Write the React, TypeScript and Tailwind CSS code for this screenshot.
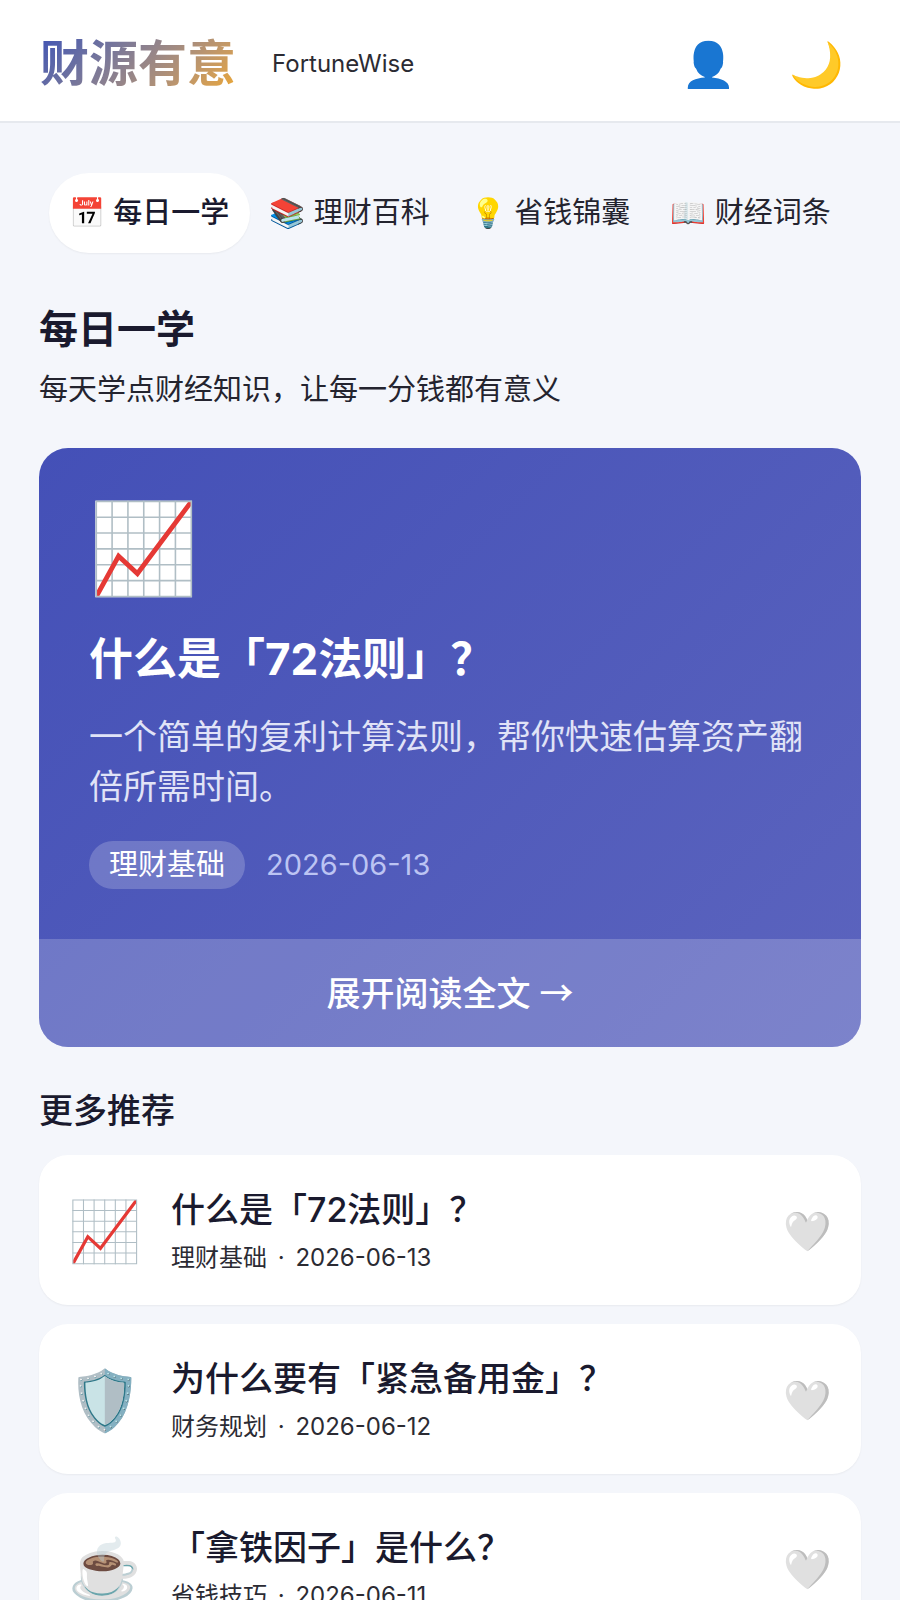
import { useState } from 'react';

const TABS = [
  { id: 'daily', label: '每日一学', icon: '📅' },
  { id: 'wiki', label: '理财百科', icon: '📚' },
  { id: 'saving', label: '省钱锦囊', icon: '💡' },
  { id: 'terms', label: '财经词条', icon: '📖' },
];

const ARTICLES = [
  { title: '什么是「72法则」？', category: '理财基础', date: '2026-06-13', icon: '📈' },
  { title: '为什么要有「紧急备用金」？', category: '财务规划', date: '2026-06-12', icon: '🛡️' },
  { title: '「拿铁因子」是什么？', category: '省钱技巧', date: '2026-06-11', icon: '☕' },
];

export default function App() {
  const [tab, setTab] = useState('daily');
  const [liked, setLiked] = useState<string[]>([]);

  const toggleLike = (title: string) =>
    setLiked((prev) => (prev.includes(title) ? prev.filter((t) => t !== title) : [...prev, title]));

  return (
    <div className="flex h-screen flex-col bg-[#f4f6fb] font-[Inter,'Noto_Sans_CJK_SC','Noto_Color_Emoji',sans-serif] text-[#1a1a2e]">
      <header className="flex shrink-0 items-center justify-between border-b-2 border-[#e6e9ee] bg-white px-10 pt-[31px] pb-6">
        <div className="flex items-center gap-9">
          <h1 className="bg-linear-135 from-[#3f51b5] to-[#f0a81c] bg-clip-text text-[49px] leading-[66px] font-bold text-transparent">
            财源有意
          </h1>
          <span className="text-2xl text-[#2b2b33]">FortuneWise</span>
        </div>
        <div className="flex items-center gap-[53px] pr-4 text-[44px] leading-none">
          <button type="button" aria-label="个人中心">
            👤
          </button>
          <button type="button" aria-label="夜间模式">
            🌙
          </button>
        </div>
      </header>

      <main className="min-h-0 flex-1 overflow-y-auto px-[39px] pt-[50px] [scrollbar-width:none]">
        <nav className="flex px-[10px]">
          {TABS.map((item) => (
            <button
              key={item.id}
              type="button"
              onClick={() => setTab(item.id)}
              className={`flex h-20 flex-1 items-center justify-center gap-2 rounded-full text-[29px] whitespace-nowrap ${
                tab === item.id ? 'bg-white font-medium shadow-xs' : 'text-[#24242f]'
              }`}
            >
              <span className="w-9 shrink-0">{item.icon}</span>
              {item.label}
            </button>
          ))}
        </nav>

        <section className="mt-12">
          <h2 className="text-[39px] leading-[56px] font-bold">每日一学</h2>
          <p className="mt-[9px] text-[29px] leading-[48px] text-[#24242f]">每天学点财经知识，让每一分钱都有意义</p>
        </section>

        <article className="mt-[34px] overflow-hidden rounded-[29px] bg-linear-135 from-[#4450b7] to-[#5c64be] text-white">
          <div className="px-[50px] py-[50px]">
            <div className="text-[88px] leading-[99px]">📈</div>
            <h3 className="mt-[30px] text-[44px] leading-[64px] font-bold">什么是「72法则」？</h3>
            <p className="mt-[21px] text-[34px] leading-[50px] text-[#e0e3f7]">
              一个简单的复利计算法则，帮你快速估算资产翻倍所需时间。
            </p>
            <div className="mt-[29px] flex items-center gap-[21px] text-[29px] leading-[48px]">
              <span className="rounded-full bg-white/20 px-5">理财基础</span>
              <time className="text-[#bcc4f3]">2026-06-13</time>
            </div>
          </div>
          <button type="button" className="w-full bg-white/20 py-7 text-[34px] leading-[50px] font-medium">
            展开阅读全文 <span className="font-['Noto_Sans_CJK_SC',sans-serif]">→</span>
          </button>
        </article>

        <h2 className="mt-[39px] text-[34px] leading-[50px] font-medium">更多推荐</h2>
        <ul className="mt-[19px] flex flex-col gap-[19px] pb-10">
          {ARTICLES.map((article) => (
            <li
              key={article.title}
              className="flex items-center gap-8 rounded-[29px] bg-white py-[31px] pr-[29px] pl-8 shadow-xs"
            >
              <div className="flex w-[68px] shrink-0 justify-center text-[59px] leading-none">{article.icon}</div>
              <div className="min-w-0 flex-1">
                <h3 className="text-[34px] leading-[48px] font-medium">{article.title}</h3>
                <p className="mt-2 text-2xl text-[#2b2b33]">
                  {article.category} <span className="mx-1">·</span> {article.date}
                </p>
              </div>
              <button
                type="button"
                aria-label="收藏"
                aria-pressed={liked.includes(article.title)}
                onClick={() => toggleLike(article.title)}
                className="text-[39px] leading-none"
              >
                {liked.includes(article.title) ? '❤️' : '🤍'}
              </button>
            </li>
          ))}
        </ul>
      </main>
    </div>
  );
}
